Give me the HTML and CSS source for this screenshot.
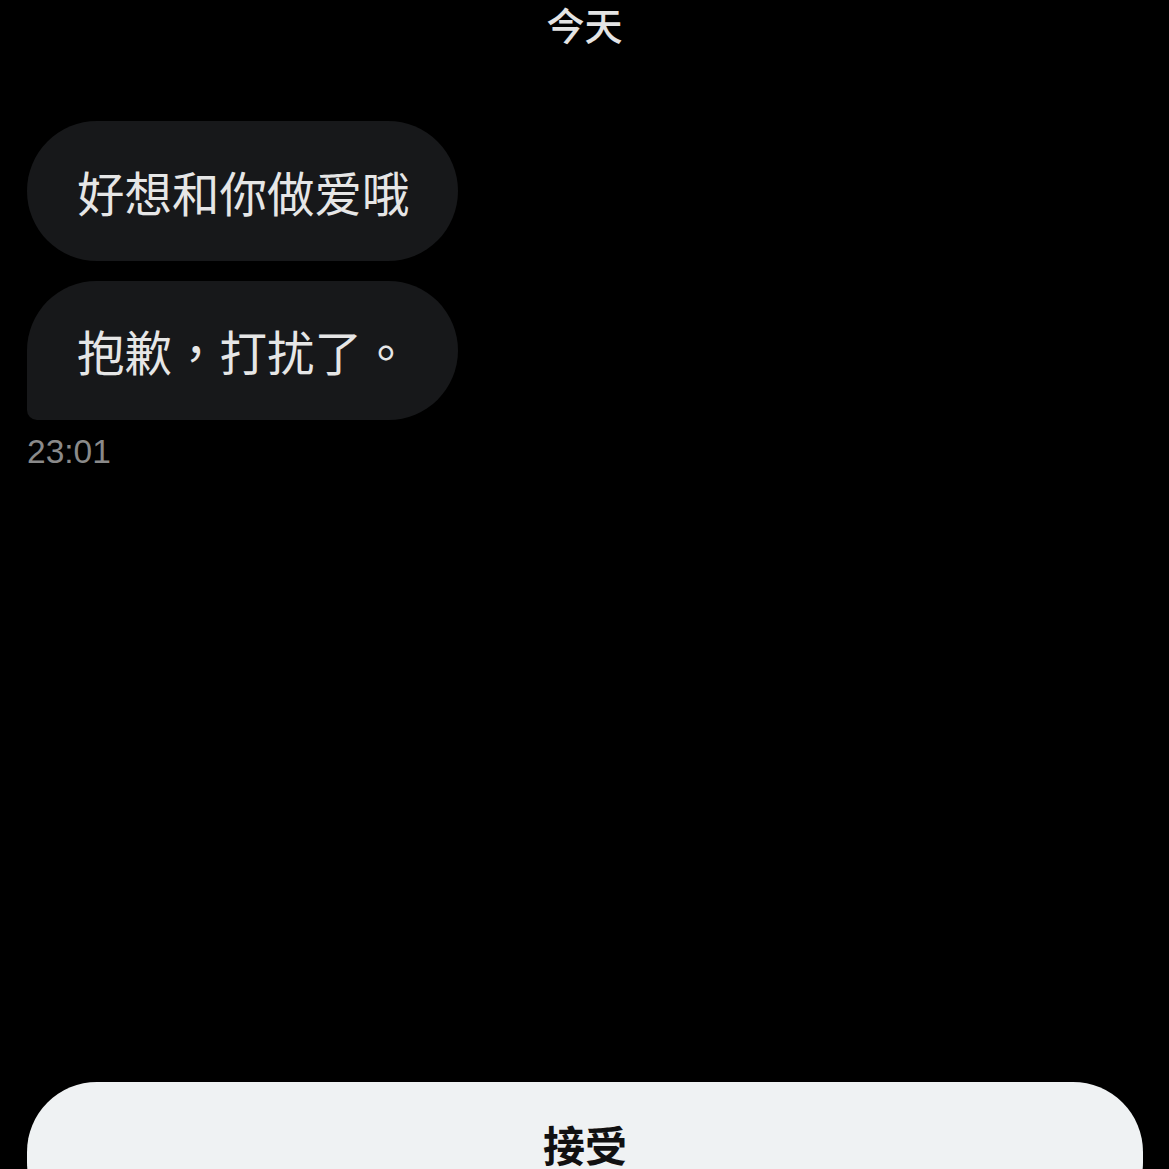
FILE: index.html
```html
<!DOCTYPE html>
<html lang="zh-Hant">
<head>
<meta charset="utf-8">
<link rel="stylesheet" href="styles.css">
</head>
<body>
<div class="screen">
  <div class="day">今天</div>
  <div class="thread">
    <div class="bubble first" lang="zh-TW">好想和你做爱哦</div>
    <div class="bubble last" lang="zh-TW">抱歉，打扰了。</div>
    <div class="time">23:01</div>
  </div>
  <div class="spacer"></div>
  <div class="actions">
    <button class="accept">接受</button>
  </div>
</div>
</body>
</html>
```
FILE: styles.css
```css
html, body {
  margin: 0;
  padding: 0;
  background: #000;
  height: 100%;
  overflow: hidden;
}
.screen {
  height: 1169px;
  display: flex;
  flex-direction: column;
  font-family: "Noto Sans CJK SC", "Noto Sans", sans-serif;
}
.day {
  text-align: center;
  color: #e4e4e4;
  font-size: 38px;
  font-weight: 500;
  line-height: 48px;
  margin-top: 0;
  margin-bottom: 4px;
}
.thread {
  display: flex;
  flex-direction: column;
  align-items: flex-start;
  gap: 20px;
  padding: 69px 27px 0;
}
.bubble {
  width: 431px;
  box-sizing: border-box;
  height: 140px;
  padding: 0 0 0 50px;
  display: flex;
  align-items: center;
  background: #17181a;
  color: #e6e6e6;
  font-family: "Noto Sans CJK TC", "Noto Sans CJK SC", sans-serif;
  font-size: 47.5px;
  border-radius: 70px;
}
.bubble.last {
  border-radius: 70px 70px 70px 10px;
  height: 139px;
}
.time {
  margin-top: -7px;
  margin-left: 0;
  font-family: "Liberation Sans", Arial, sans-serif;
  font-size: 33.5px;
  color: #8a8a8a;
  line-height: 38px;
}
.spacer {
  flex: 1;
}
.actions {
  padding: 0 26px 0 27px;
}
.accept {
  width: 100%;
  height: 150px;
  margin-bottom: -63px;
  border: 0;
  background: #eff2f3;
  border-radius: 70px;
  font-family: "Noto Sans CJK SC", sans-serif;
  font-size: 42px;
  font-weight: 700;
  color: #111;
  padding: 0 0 27px;
}
```
